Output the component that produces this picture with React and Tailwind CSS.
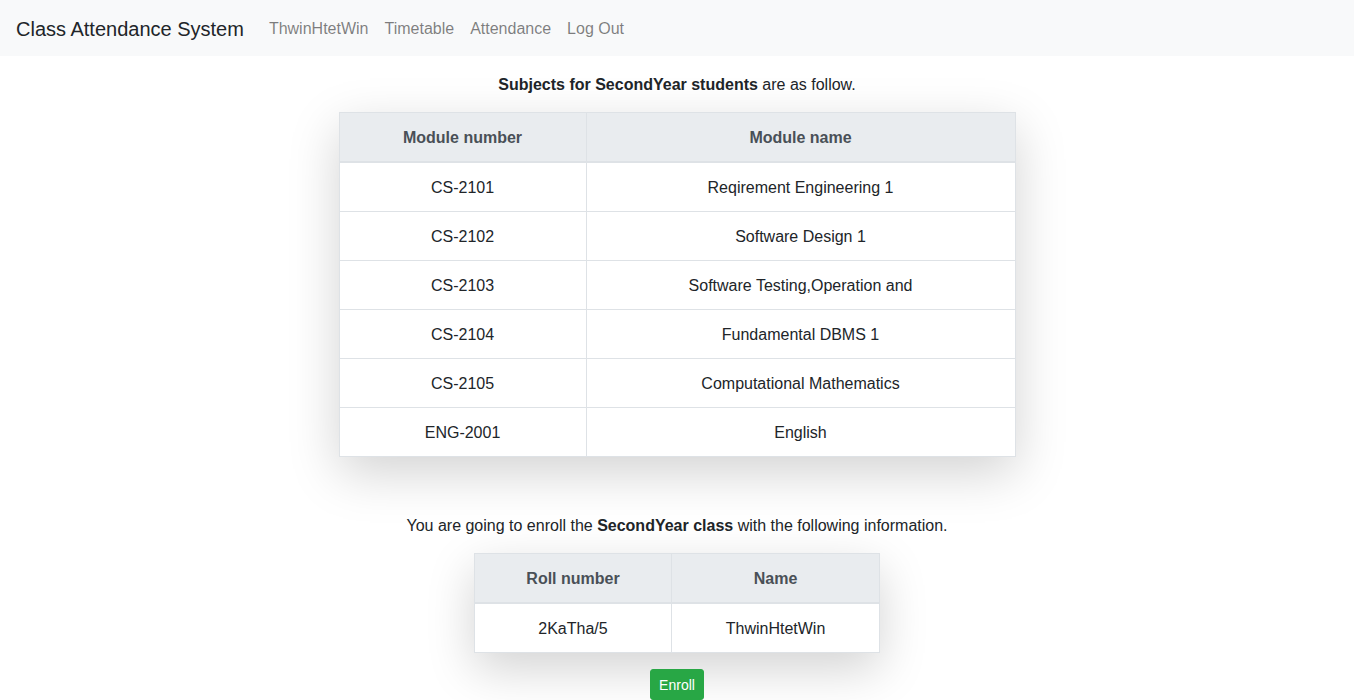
import React from 'react';

const subjects = [
  ['CS-2101', 'Reqirement Engineering 1'],
  ['CS-2102', 'Software Design 1'],
  ['CS-2103', 'Software Testing,Operation and'],
  ['CS-2104', 'Fundamental DBMS 1'],
  ['CS-2105', 'Computational Mathematics'],
  ['ENG-2001', 'English'],
];

const th = 'border border-[#dee2e6] border-b-2 bg-[#e9ecef] text-[#495057] font-bold px-3 pt-[13px] pb-[11px] text-center';
const td = 'border border-[#dee2e6] px-3 pt-[13px] pb-[11px] text-center';

const App = () => {
  return (
    <div className="min-h-screen bg-white text-[#212529] text-base leading-6 font-['Liberation_Sans',Arial,sans-serif]">
      <nav className="flex items-center h-14 px-4 bg-[#f8f9fa]">
        <span className="text-xl leading-[30px] pt-[6px] pb-[4px] mr-[17px]">Class Attendance System</span>
        <div className="flex">
          {['ThwinHtetWin', 'Timetable', 'Attendance', 'Log Out'].map((l) => (
            <a key={l} className="px-2 pt-[9px] pb-[7px] text-black/50">{l}</a>
          ))}
        </div>
      </nav>

      <div className="flex flex-col items-center">
        <p className="mt-[17px] mb-[15px]">
          <b>Subjects for SecondYear students</b> are as follow.
        </p>
        <table className="w-[677px] border-collapse shadow-[0_1rem_3rem_rgba(0,0,0,0.175)] mb-[57px]">
          <thead>
            <tr>
              <th className={`${th} w-[247px]`}>Module number</th>
              <th className={th}>Module name</th>
            </tr>
          </thead>
          <tbody>
            {subjects.map(([num, name]) => (
              <tr key={num}>
                <td className={td}>{num}</td>
                <td className={td}>{name}</td>
              </tr>
            ))}
          </tbody>
        </table>

        <p className="mb-[15px]">
          You are going to enroll the <b>SecondYear class</b> with the following information.
        </p>
        <table className="w-[406px] border-collapse shadow-[0_1rem_3rem_rgba(0,0,0,0.175)] mb-4">
          <thead>
            <tr>
              <th className={`${th} w-[197px]`}>Roll number</th>
              <th className={th}>Name</th>
            </tr>
          </thead>
          <tbody>
            <tr>
              <td className={td}>2KaTha/5</td>
              <td className={td}>ThwinHtetWin</td>
            </tr>
          </tbody>
        </table>

        <button className="bg-[#28a745] border border-[#28a745] text-white text-sm leading-[21px] px-2 pt-[5px] pb-[3px] rounded-[3px]">
          Enroll
        </button>
      </div>
    </div>
  );
};

export default App;
